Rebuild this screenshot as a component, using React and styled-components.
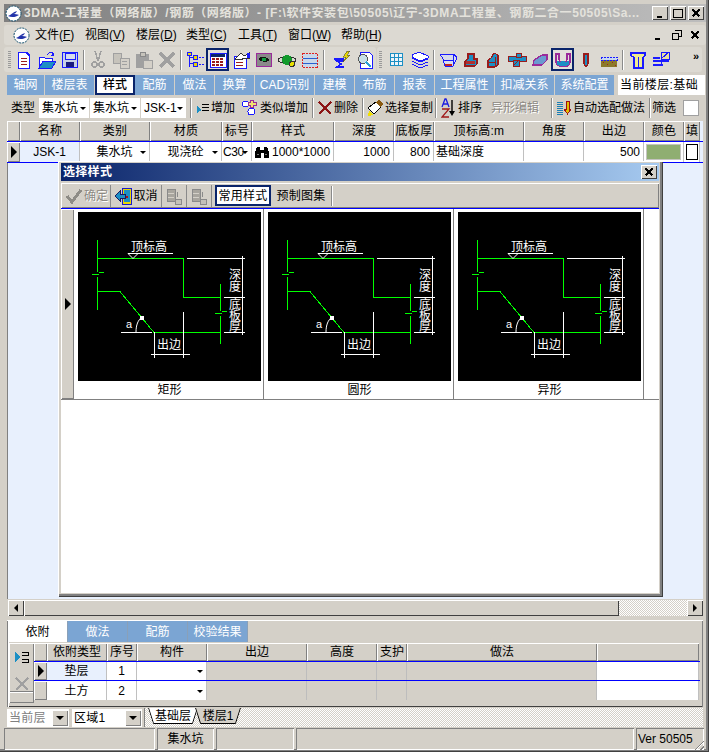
import React from "react";
import styled, { createGlobalStyle, css } from "styled-components";

const GRAY = "#d4d0c8";
const TAB = "#7ba5d3";
const BLUE = "#0000ff";
const raised = css`box-shadow: inset 1px 1px 0 #fff, inset -1px -1px 0 #808080;`;
const sunken = css`box-shadow: inset 1px 1px 0 #808080, inset -1px -1px 0 #fff;`;

const Global = createGlobalStyle`
  html, body { margin: 0; padding: 0; width: 709px; height: 752px; overflow: hidden; background: ${GRAY}; }
  * { box-sizing: border-box; }
  svg { display: block; flex: none; }
`;

const Win = styled.div`
  position: relative; width: 709px; height: 752px; background: ${GRAY};
  font: 12px/1 "Liberation Sans", "Noto Sans CJK SC", sans-serif; color: #000;
  padding: 4px 3px 0 4px; display: flex; flex-direction: column;
  box-shadow: inset -1px -1px 0 #404040, inset -3px -3px 0 #808080;
`;
const Title = styled.div`
  height: 18px; flex: none; display: flex; align-items: center; padding: 0 2px 0 1px; gap: 2px;
  background: linear-gradient(90deg, #808080, #bdbdbd);
`;
const TitleText = styled.div`
  flex: 1; color: #e4e2dc; font-weight: 700; white-space: nowrap; overflow: hidden; width: 0; letter-spacing: .56px;
`;
const CapBtn = styled.div`
  width: 16px; height: 14px; background: ${GRAY}; display: flex; align-items: center; justify-content: center;
  box-shadow: inset 1px 1px 0 #fff, inset -1px -1px 0 #404040;
`;
const Bar = styled.div`
  background: #dcd9d2; border-radius: 3px; display: flex; align-items: center;
`;
const Menu = styled(Bar)`
  height: 20px; margin-top: 3px; padding-left: 9px; flex: none;
`;
const MenuItem = styled.div`
  width: ${p => p.$w}px; white-space: nowrap;
  u { text-underline-offset: 1px; }
`;
const MdiBtns = styled.div`
  margin-left: auto; display: flex; gap: 7px; padding-right: 6px; align-items: center;
`;
const Tools = styled.div`
  margin-top: 2px; height: 25px; flex: none; display: flex; gap: 1px;
`;
const ToolGroup = styled(Bar)`
  width: ${p => p.$w}px; height: 25px; padding-left: ${p => p.$pl || 0}px;
`;
const Grip = styled.div`
  width: ${p => p.$w}px; height: 17px; flex: none; padding-left: 2px;
  &::before { content: ""; display: block; width: 3px; height: 100%;
    background: repeating-linear-gradient(180deg, #9a9a9a 0 1px, transparent 1px 2px); }
`;
const Sep = styled.div`
  width: ${p => p.$w}px; height: ${p => p.$h || 20}px; flex: none; position: relative;
  &::before { content: ""; position: absolute; left: ${p => p.$x ?? 2}px; top: 0; bottom: 0; width: 1px; background: #8a8a8a; box-shadow: 1px 0 0 #fff; }
`;
const ToolBtn = styled.div`
  width: 23px; height: 23px; flex: none; display: flex; align-items: center; justify-content: center;
  ${p => p.$on && css`border: 1px solid #0a246a; box-shadow: inset 0 0 0 1px #0a246a; background: #e2e0db;`}
`;
const More = styled.div`
  margin-left: auto; padding-right: 4px; font-weight: 700; font-size: 11px; letter-spacing: -1px; transform: translateY(-3px);
`;
const Tabs = styled.div`
  margin: 3px 1px 0 3px; height: 20px; flex: none; display: flex; align-items: stretch;
`;
const Tab = styled.div`
  width: ${p => p.$w}px; flex: none; background: ${TAB}; color: #fff; display: flex; align-items: center; justify-content: center;
  border-right: 1px solid #d4d0c8; white-space: nowrap;
  ${p => p.$on && css`background: #fff; color: #000; border: 2px solid #0a246a; font-weight: 500;`}
`;
const FloorTag = styled.div`
  margin-left: 3px; flex: 1; background: #fff; display: flex; align-items: center; padding-left: 2px; white-space: nowrap; overflow: hidden; letter-spacing: .4px;
`;
const Strip = styled.div`
  margin: 1px 0 0 3px; height: 24px; flex: none; display: flex; align-items: center;
`;
const StripLabel = styled.div`
  width: ${p => p.$w}px; flex: none; padding-left: ${p => p.$pl || 0}px; white-space: nowrap;
`;
const Combo = styled.div`
  width: ${p => p.$w}px; height: 20px; flex: none; background: #fff; display: flex; align-items: center; justify-content: space-between;
  padding: 0 3px 0 3px; margin-right: 1px; white-space: nowrap;
`;
const Caret = styled.i`
  display: block; flex: none; width: 0; height: 0; border: 3px solid transparent; border-top: 3px solid #000; border-bottom: 0;
`;
const StripBtn = styled.div`
  width: ${p => p.$w}px; flex: none; display: flex; align-items: center; gap: 1px; white-space: nowrap;
  padding-left: ${p => p.$pl || 0}px; color: ${p => p.$off ? "#8d8a84" : "#000"};
  ${p => p.$off && "text-shadow: 1px 1px 0 #fff;"}
`;
const CheckBox = styled.div`
  width: 16px; height: 16px; background: #fff; flex: none; margin-left: 6px; border: 1px solid #a0a0a0;
`;
const GridArea = styled.div`
  position: relative; margin: 1px 3px 0 3px; height: 478px; flex: none; background: #e8f0fd;
  box-shadow: inset 1px 0 0 #808080;
`;
const GridRow = styled.div`
  display: flex; height: ${p => p.$h}px; border-bottom: ${p => p.$line ? `1px solid ${BLUE}` : "0"};
`;
const Head = styled.div`
  width: ${p => p.$w}px; flex: none; background: ${GRAY}; display: flex; align-items: center; justify-content: center;
  white-space: nowrap; ${raised}; letter-spacing: ${p => p.$ls || 0}px;
`;
const Ind = styled.div`
  width: ${p => p.$w}px; flex: none; background: ${GRAY}; display: flex; align-items: center; justify-content: center; ${raised};
  &::after { content: ""; display: ${p => p.$on ? "block" : "none"}; border-left: 6px solid #000; border-top: 6px solid transparent; border-bottom: 6px solid transparent; }
`;
const Cell = styled.div`
  width: ${p => p.$w}px; flex: none; background: ${p => p.$bg || "#fff"}; display: flex; align-items: center; white-space: nowrap;
  justify-content: ${p => p.$j || "center"}; padding: ${p => p.$pad || "0"}; gap: 2px; letter-spacing: ${p => p.$ls || 0}px;
  border-right: 1px solid #c0c0c0; position: relative;
`;
const CaretAt = styled(Caret)`
  position: absolute; right: 3px; top: 50%; margin-top: -1px;
`;
const Swatch = styled.div`
  width: 35px; height: 16px; background: #8fae71; border: 1px solid #c4c4c0;
`;
const FillBox = styled.div`
  width: 12px; height: 16px; background: #fff; border: 1px solid #000;
`;

const Dialog = styled.div`
  position: absolute; left: 51px; top: 40px; width: 604px; height: 435px; background: ${GRAY}; padding: 2px 3px 3px 3px;
  display: flex; flex-direction: column;
  box-shadow: inset 1px 1px 0 #fff, inset -2px -2px 0 #808080, 1px 1px 0 #404040;
`;
const DlgTitle = styled.div`
  height: 18px; flex: none; display: flex; align-items: center; justify-content: space-between; padding: 0 0 0 2px;
  background: linear-gradient(90deg, #0a246a, #a6caf0); color: #fff; font-weight: 700; letter-spacing: .3px;
`;
const DlgClose = styled(CapBtn)`
  margin-right: 2px;
`;
const DlgBar = styled.div`
  margin-top: 2px; height: 26px; flex: none; display: flex; align-items: center; ${raised}; padding-left: 2px;
  border-bottom: 1px solid ${BLUE};
`;
const DlgBtn = styled.div`
  width: ${p => p.$w}px; height: 22px; flex: none; display: flex; align-items: center; justify-content: center; gap: 1px; white-space: nowrap;
  color: ${p => p.$off ? "#8d8a84" : "#000"}; ${p => p.$off && "text-shadow: 1px 1px 0 #fff;"}
  border-right: 1px solid #8a8a8a;
`;
const PickTab = styled.div`
  width: ${p => p.$w}px; height: 21px; flex: none; display: flex; align-items: center; justify-content: center; letter-spacing: .3px;
  ${p => p.$on && css`background: #fff; border: 1px solid #0a246a; box-shadow: inset 0 0 0 1px #0a246a; margin-left: 3px;`}
`;
const DlgBody = styled.div`
  flex: 1; background: #fff; display: flex; flex-direction: column;
`;
const Cards = styled.div`
  height: 191px; flex: none; display: flex; border-bottom: 1px solid #808080;
`;
const CardSide = styled.div`
  width: 13px; flex: none; background: ${GRAY}; display: flex; align-items: center; justify-content: center; ${raised};
  &::after { content: ""; border-left: 6px solid #000; border-top: 6px solid transparent; border-bottom: 6px solid transparent; }
`;
const Card = styled.div`
  width: 190px; flex: none; border-right: 1px solid #808080; padding: 3px 0 0 4px; display: flex; flex-direction: column;
`;
const CardCaption = styled.div`
  width: 183px; text-align: center; margin-top: 3px; font-size: 12px;
`;

const HScroll = styled.div`
  margin: 1px 3px 0 4px; height: 16px; flex: none; display: flex;
  background: repeating-conic-gradient(#fff 0 25%, ${GRAY} 0 50%) 0 0 / 2px 2px;
`;
const ScrollBtn = styled.div`
  width: 16px; flex: none; background: ${GRAY}; display: flex; align-items: center; justify-content: center;
  box-shadow: inset 1px 1px 0 #fff, inset -1px -1px 0 #404040;
  &::after { content: ""; border-top: 4px solid transparent; border-bottom: 4px solid transparent;
    ${p => p.$right ? "border-left: 4px solid #000;" : "border-right: 4px solid #000;"} }
`;
const ScrollThumb = styled.div`
  width: 595px; flex: none; background: ${GRAY}; box-shadow: inset 1px 1px 0 #fff, inset -1px -1px 0 #404040;
`;
const ScrollGap = styled.div`
  flex: 1;
`;
const Panel = styled.div`
  margin: 4px 3px 0 3px; height: 87px; flex: none; background: ${GRAY}; border-top: 1px solid #fff;
  box-shadow: inset 1px 0 0 #808080, inset -1px 0 0 #808080, inset 0 -1px 0 #404040;
  display: flex; flex-direction: column; padding: 0 1px;
`;
const PanelTabs = styled.div`
  height: 21px; flex: none; display: flex;
`;
const PanelTab = styled.div`
  width: 60px; flex: none; display: flex; align-items: center; justify-content: center; white-space: nowrap;
  background: ${p => p.$on ? "#fff" : TAB}; color: ${p => p.$on ? "#000" : "#fff"}; border-right: 1px solid #8aa0b8;
`;
const PanelBody = styled.div`
  display: flex; padding: 1px 2px 0 1px; flex: 1;
  box-shadow: inset 1px 0 0 #fff;
`;
const SideTools = styled.div`
  width: 25px; flex: none; display: flex; flex-direction: column; align-items: center; height: 60px; ${raised}; padding-top: 7px; gap: 10px; position: relative;
  &::after { content: ""; position: absolute; left: 1px; right: 1px; bottom: 11px; height: 1px; background: #808080; box-shadow: 0 1px 0 #fff; }
`;
const SubGrid = styled.div`
  flex: 1; display: flex; flex-direction: column;
`;
const GrayCell = styled(Cell)`
  background: ${GRAY}; border-right: 1px solid #bdbdbd;
`;
const SheetBar = styled.div`
  margin: 1px 0 0 3px; height: 19px; flex: none; display: flex; align-items: center;
`;
const SheetCombo = styled.div`
  width: ${p => p.$w}px; height: 18px; flex: none; background: #fff; display: flex; align-items: center; padding-left: 2px; justify-content: space-between;
  margin-right: ${p => p.$mr || 0}px; color: ${p => p.$mute ? "#808080" : "#000"}; letter-spacing: .3px;
`;
const ComboDrop = styled.div`
  width: 16px; height: 16px; margin-right: 1px; background: ${GRAY}; display: flex; align-items: center; justify-content: center;
  box-shadow: inset 1px 1px 0 #fff, inset -1px -1px 0 #808080;
  &::after { content: ""; border-top: 4px solid #000; border-left: 4px solid transparent; border-right: 4px solid transparent; }
`;
const SheetTabs = styled.div`
  flex: 1; height: 19px; margin: 0 3px 0 2px; display: flex; align-items: flex-start; padding-left: 3px; border-left: 1px solid #808080;
  background: repeating-conic-gradient(#fff 0 25%, ${GRAY} 0 50%) 0 0 / 2px 2px;
`;
const Sheet = styled.div`
  width: ${p => p.$w}px; height: 16px; display: flex; align-items: center; justify-content: center; flex: none; white-space: nowrap;
  background: ${p => p.$on ? "#fff" : GRAY};
  clip-path: polygon(0 0, 100% 0, calc(100% - 5px) 100%, 5px 100%); margin-right: -3px; position: relative;
`;
const SheetEdge = styled.svg`
  position: absolute; left: 0; top: 0;
`;
const Status = styled.div`
  margin: 1px 3px 0 0; height: 22px; flex: none; display: flex; gap: 2px;
`;
const StatusCell = styled.div`
  width: ${p => p.$w}px; flex: none; ${sunken}; display: flex; align-items: center; justify-content: ${p => p.$j || "center"}; padding-left: ${p => p.$pl || 0}px;
  position: relative; white-space: nowrap;
`;
const Resize = styled.div`
  position: absolute; right: 0; bottom: 0; width: 12px; height: 12px;
  background: repeating-linear-gradient(135deg, transparent 0 2px, #808080 2px 3px, #fff 3px 4px);
  clip-path: polygon(100% 0, 100% 100%, 0 100%);
`;

/* drawings */
const I = ({ s = 20, children, vb = 20 }) => (
  <svg width={s} height={s} viewBox={`0 0 ${vb} ${vb}`} shapeRendering="crispEdges">{children}</svg>
);
const Logo = () => (
  <svg width="17" height="17" viewBox="0 0 17 17">
    <circle cx="8.5" cy="8.5" r="7.5" fill="#fff" stroke="#0a4a6a" strokeDasharray="2 1" />
    <path d="M3 11c3-1 5-4 9-5-1 2-2 3-4 3 2 0 4 0 6 1-3 2-7 3-11 1z" fill="#2233aa" />
  </svg>
);
const B = "#1a1aff", R = "#9a1c1c", T = "#1c8fc4", P = "#9a2a9a", G = "#a0a0a0";
const icons = {
  doc: <I><path d="M4.5 2.5h8l3 3v13h-11z" fill="#fff" stroke={B} strokeWidth="1.5" /><path d="M7 8h6M7 11h6M7 14h6" stroke={R} /></I>,
  open: <I><path d="M2 7h5l1 1h7v3H6l-3 7H2z" fill="#fff" stroke={B} /><path d="M6 11h13l-4 7H2z" fill="#1c8fc4" stroke={B} /><path d="M10 5c2-3 5-3 7-1" fill="none" stroke={B} /><path d="M17 2v4h-3z" fill={B} /></I>,
  save: <I><rect x="2.5" y="2.5" width="15" height="15" fill="#c8d0e8" stroke={B} strokeWidth="1.5" /><rect x="5" y="3" width="10" height="6" fill="#d8dcec" stroke={B} /><rect x="6" y="12" width="8" height="5" fill="#1a1a80" /></I>,
  cut: <I><path d="M7 1l3 10M13 1l-3 10" stroke={G} strokeWidth="1.5" /><circle cx="6.5" cy="14.5" r="2.5" fill="none" stroke={G} strokeWidth="1.5" /><circle cx="13.5" cy="14.5" r="2.5" fill="none" stroke={G} strokeWidth="1.5" /></I>,
  copy: <I><path d="M2 3h8v10H2z" fill="#c6c3bb" stroke={G} /><path d="M9 8h9v10H9z" fill="#d4d0c8" stroke={G} /><path d="M11 11h5M11 14h5" stroke={G} /></I>,
  paste: <I><path d="M2 4h13v14H2z" fill={G} /><path d="M6 2h5v4H6z" fill="#c6c3bb" stroke="#888" /><path d="M9 10h9v8H9z" fill="#d4d0c8" stroke={G} /></I>,
  del: <I><path d="M3 3l14 14M17 3L3 17" stroke={G} strokeWidth="3" /></I>,
  tree: <I><path d="M4 3v14M4 7h6M4 13h6" stroke={B} /><rect x="2" y="2" width="4" height="3" fill="#e8d800" stroke={B} /><rect x="8" y="5" width="4" height="4" fill="#e8d800" stroke={B} /><rect x="8" y="12" width="4" height="4" fill="#e8d800" stroke={B} /><path d="M14 7h5M14 14h5" stroke={B} strokeDasharray="2 1" /></I>,
  cal: <I><rect x="2" y="3" width="16" height="14" fill="#fff" stroke={B} /><rect x="3" y="4" width="14" height="3" fill="#0a246a" /><path d="M4 9h12M4 12h12M4 15h12" stroke="#9a1c1c" strokeWidth="2" strokeDasharray="3 1" /></I>,
  form: <I><rect x="3" y="6" width="12" height="12" fill="#fff" stroke={B} /><path d="M5 12h7M5 15h7" stroke={R} /><path d="M4 9l6-6 3 3 5-3v5h-5l-3 2z" fill="#fff" stroke="#333" /><rect x="16" y="3" width="3" height="5" fill={B} /></I>,
  eye: <I><rect x="2.5" y="3.5" width="15" height="13" fill="#8a8a8a" stroke={P} strokeWidth="1.2" /><path d="M4 9c3-3 8-3 12 1-4 3-9 2-12-1z" fill="#101810" /><circle cx="10" cy="9.5" r="2" fill="#10a040" /></I>,
  planet: <I><ellipse cx="10" cy="10" rx="9" ry="3" fill="none" stroke="#303030" /><circle cx="10" cy="10" r="5" fill="#129a2c" /><circle cx="15" cy="14" r="2.5" fill="#e8e000" stroke="#333" /></I>,
  rows: <I><rect x="2.5" y="3.5" width="15" height="14" fill="#c8d8ea" stroke="#e02020" strokeWidth="1.5" strokeDasharray="2 1" /><path d="M3 8h14M3 13h14" stroke="#2a60d0" /></I>,
  sigma: <I><path d="M2 9h9v2H5l4 3-4 3h7" fill="none" stroke={B} strokeWidth="1.5" /><path d="M15 1l-4 6h3l-3 5 7-7h-3l3-4z" fill="#e8d800" stroke="#333" strokeWidth=".5" /></I>,
  find: <I><path d="M5 2h9l3 3v13H5z" fill="#fff" stroke={B} /><circle cx="8" cy="9" r="4.5" fill="#c8e0e8" stroke="#555" /><path d="M11 12l5 5" stroke="#2a9fd6" strokeWidth="2" /></I>,
  grid: <I><rect x="3.5" y="3.5" width="12" height="12" fill="#eef4f8" stroke={T} /><path d="M7.5 4v11M11.5 4v11M4 7.5h11M4 11.5h11" stroke={T} /></I>,
  layers: <I><path d="M2 5l7-3 9 4v2l-8 3-8-4z" fill="#fff" stroke={B} /><path d="M2 8l8 4 8-3M2 11l8 4 8-3M2 14l8 4 8-3" fill="none" stroke={B} /></I>,
  pit1: <I><path d="M2 4h14l3 4-4 8H7L5 9z" fill="#d8dcec" stroke={B} /><path d="M6 10h9M15 4v12" stroke={B} /><path d="M7 14h7v2H7z" fill="#c02020" /></I>,
  pit2: <I><path d="M7 4h6v5h3v5l-2 2H4v-5l3-2z" fill={T} stroke={R} strokeWidth="1.2" /><path d="M5 11h9v3H5z" fill="#b03030" /></I>,
  pit3: <I><path d="M10 3l4 2v10l-3 2H4v-7l3-2z" fill={T} stroke={R} strokeWidth="1.2" /><path d="M11 7v9M5 12h6" stroke={R} /></I>,
  pit4: <I><path d="M1 6h18v5H1z" fill={T} stroke={R} /><path d="M9 3h5v4H9zM6 10h6v6H6z" fill={T} stroke={R} /><path d="M7 15l4-4" stroke={R} /></I>,
  pit5: <I><path d="M12 5h5v5l-5 5H3l1-5z" fill="#6a9ad0" stroke={P} strokeWidth="1.2" /></I>,
  sump: <I><path d="M3 11h14v2c0 5-14 5-14 0z" fill={T} /><path d="M3 4h3v6c0 3 8 3 8 0V4h3v9c0 5-14 5-14 0z" fill="none" stroke={P} strokeWidth="1.1" /><path d="M7 12h6v1H7z" fill={T} /></I>,
  pile: <I><path d="M8 4h4v10l-2 3-2-3z" fill={T} stroke={R} strokeWidth="1.2" /><path d="M8 3h4v2H8z" fill={R} /></I>,
  soil: <I><rect x="2" y="10" width="16" height="7" fill="#8c7a2a" /><rect x="2" y="7" width="16" height="3" fill="#c8d8f0" stroke={B} strokeDasharray="2 1" /><path d="M4 12h1M8 14h1M13 12h1M16 15h1" stroke="#a02020" /></I>,
  col: <I><path d="M3 3h14v3l-2 1v11H6V7L3 6z" fill="#f0ec90" stroke={B} strokeWidth="1.2" /><path d="M10 7v11" stroke={B} /></I>,
  beam: <I><path d="M2 8h7M2 11h16M2 15h10M13 8h5" stroke={B} strokeWidth="1.2" /><rect x="10" y="2" width="8" height="7" fill="#e8e0a0" stroke={B} /><path d="M10 9l8-7" stroke={B} /><path d="M10 11v5" stroke={B} /></I>,
};
const Tool = ({ k, on }) => <ToolBtn $on={on}>{icons[k]}</ToolBtn>;

const PlusIcon = () => <I s={14} vb={14}><path d="M1 12l0-7 5 4z" fill="#1c8fc4" /><path d="M6 3h7M6 6h7M6 9h7" stroke="#000" /></I>;
const SimilarIcon = () => <I s={18} vb={18}><circle cx="4.5" cy="5" r="3" fill="#fff" stroke={B} /><circle cx="10.5" cy="12.5" r="3.5" fill="#fff" stroke={B} /><path d="M9 1h3v2h3v3h-3v2H9V6H7V3h2z" fill="#f0e070" stroke={P} /></I>;
const RedX = () => <I s={16} vb={16}><path d="M2 2l12 12M14 2L2 14" stroke="#8c1414" strokeWidth="2.4" /></I>;
const Brush = () => <I s={18} vb={18}><path d="M2 9l8-6 5 5-7 7z" fill="#fff" stroke="#000" /><path d="M10 3l3-2 4 4-3 3z" fill="#8a5a10" /><path d="M3 12l4 4-5 1z" fill="#f0e000" /></I>;
const SortIcon = () => (
  <svg width="16" height="20" viewBox="0 0 16 20">
    <path d="M1 9L4 1h1l3 8M2.5 6h4" fill="none" stroke="#1a1ae0" strokeWidth="1.3" />
    <path d="M1 11h7L1 19h7" fill="none" stroke="#a01818" strokeWidth="1.3" />
    <path d="M11 2v13" stroke="#000" strokeWidth="1.4" /><path d="M8 13h6l-3 5z" fill="#000" />
  </svg>
);
const AutoIcon = () => <I s={16} vb={16}><path d="M1 2h6M1 4h6M1 6h6M1 8h6M1 10h6M1 12h6M1 14h6" stroke="#1c7fb4" /><path d="M10 1h3v8h2l-3.5 5L8 9h2z" fill="#e0c000" stroke="#a01010" /></I>;
const Binoc = () => <I s={16} vb={16}><path d="M1 14V8l2-5h3v3h4V3h3l2 5v6h-5V9H9v0H7v5z" fill="#000" /><path d="M3 10h2M11 10h2" stroke="#777" /></I>;
const Check = () => <I s={18} vb={18}><path d="M2 9l5 6L16 3" fill="none" stroke="#8e8c86" strokeWidth="3" /></I>;
const Door = () => <I s={18} vb={18}><rect x="8" y="1" width="9" height="16" fill="#e8d800" stroke="#1a1acc" /><rect x="10" y="3" width="6" height="12" fill="#1c8fc4" /><path d="M1 9l5-5v3h5v4H6v3z" fill="#1c8fc4" stroke="#1a1a60" /><rect x="12" y="9" width="2" height="2" fill="#b01010" /></I>;
const DbIcon = () => <I s={18} vb={18}><rect x="2" y="2" width="8" height="12" fill="#a8a59e" stroke="#8a8a8a" /><path d="M3 6h6M3 10h6" stroke="#d4d0c8" /><path d="M12 5v5M10 12h6v5h-6z" stroke="#8a8a8a" fill="#c4c1b9" /></I>;
const SigmaLines = () => <I s={16} vb={16}><path d="M1 2v10l5-5z" fill="#1c8fc4" /><path d="M8 2h6v3H8M8 9h6v3H8" fill="none" stroke="#000" /></I>;
const GrayX = () => <I s={16} vb={16}><path d="M2 2l12 12M14 2L2 14" stroke="#a0a0a0" strokeWidth="2" /></I>;
const XGlyph = () => <I s={10} vb={10}><path d="M1.5 1.5l7 7M8.5 1.5l-7 7" stroke="#000" strokeWidth="1.6" /></I>;

const Diagram = () => {
  const g = "#00ff00", w = "#fff";
  const t = { fill: w, fontSize: 12, fontFamily: "Noto Sans CJK SC, sans-serif" };
  const v = { ...t, style: { writingMode: "vertical-rl" } };
  return (
    <svg width="183" height="169" viewBox="0 0 183 169" style={{ background: "#000" }}>
      <g stroke={g} fill="none" shapeRendering="crispEdges">
        <path d="M19.5 28V60M19.5 65V98M19.5 46.5H105.5V85.5H142.5M142.5 72V99M142.5 104V132M19.5 79.5H42M76 120.5H142.5M42 79.5L76 120.5" />
        <path d="M14 62.5H21M21 60.5H26M137 101.5H144M144 99.5H149" />
      </g>
      <g stroke={w} fill="none" shapeRendering="crispEdges">
        <path d="M50 41.5H95M109 46.5H167M164.5 44V123M146 85.5H167M146 120.5H167M43 120.5H74M76.5 120V146M105.5 100V146M73 142.5H112" />
      </g>
      <path d="M50 41.5H60L55 46.5Z" fill="none" stroke={w} />
      <path d="M58 120C58 113 60 108 64 105" fill="none" stroke={w} />
      <path d="M62 104h4v4h-4z" fill={w} />
      <text x="53" y="39" {...t}>顶标高</text>
      <text x="48" y="116" fill={w} fontSize="11" fontFamily="Liberation Sans, sans-serif">a</text>
      <text x="79" y="137" {...t}>出边</text>
      <text x="157" y="56" {...v}>深度</text>
      <text x="157" y="86" {...v} letterSpacing="-1">底板厚</text>
    </svg>
  );
};

const mainCols = [13, 60, 70, 72, 30, 82, 60, 40, 90, 60, 60, 40, 16];
const mainHead = ["名称", "类别", "材质", "标号", "样式", "深度", "底板厚", "顶标高:m", "角度", "出边", "颜色"];
const subCols = [13, 60, 30, 70, 100, 70, 30, 190, 102];
const subHead = ["依附类型", "序号", "构件", "出边", "高度", "支护", "做法", ""];

const SubRow = ({ on, name, no, line }) => (
  <GridRow $h={19} $line={line}>
    <Ind $w={subCols[0]} $on={on} />
    <Cell $w={subCols[1]} $bg={on ? "#e8f0fd" : "#fff"}>{name}</Cell>
    <Cell $w={subCols[2]}>{no}</Cell>
    <Cell $w={subCols[3]}><CaretAt /></Cell>
    <GrayCell $w={subCols[4]} />
    <GrayCell $w={subCols[5]} />
    <GrayCell $w={subCols[6]} />
    <GrayCell $w={subCols[7]} />
    <Cell $w={subCols[8]} />
  </GridRow>
);

const SheetTab = ({ w, on, first, children }) => (
  <Sheet $w={w} $on={on}>
    {children}
    <SheetEdge width={w} height={16} viewBox={`0 0 ${w} 16`}>
      <path d={`M0.5 0L5.5 15.5H${w - 5.5}L${w - 0.5} 0`} fill="none" stroke="#000" />
    </SheetEdge>
  </Sheet>
);

export default function App() {
  return (
    <Win>
      <Global />
      <Title>
        <Logo />
        <TitleText>3DMA-工程量（网络版）/钢筋（网络版）- [F:\软件安装包\50505\辽宁-3DMA工程量、钢筋二合一50505\Sa...</TitleText>
        <CapBtn><I s={10} vb={10}><path d="M2 8h5v2H2z" fill="#000" /></I></CapBtn>
        <CapBtn><I s={10} vb={10}><rect x=".5" y="1.5" width="9" height="8" fill="none" stroke="#000" /><path d="M0 1.5h10" stroke="#000" /></I></CapBtn>
        <CapBtn><XGlyph /></CapBtn>
      </Title>
      <Menu>
        <MenuItem $w={22}><Logo /></MenuItem>
        <MenuItem $w={50}>文件(<u>F</u>)</MenuItem>
        <MenuItem $w={51}>视图(<u>V</u>)</MenuItem>
        <MenuItem $w={50}>楼层(<u>D</u>)</MenuItem>
        <MenuItem $w={52}>类型(<u>C</u>)</MenuItem>
        <MenuItem $w={50}>工具(<u>T</u>)</MenuItem>
        <MenuItem $w={53}>窗口(<u>W</u>)</MenuItem>
        <MenuItem $w={50}>帮助(<u>H</u>)</MenuItem>
        <MdiBtns>
          <I s={12} vb={12}><path d="M3 9h5v2H3z" fill="#000" /></I>
          <I s={12} vb={12}><path d="M4 1.5h6v6h-2M1.5 4.5h6v6h-6z" fill="none" stroke="#000" /><path d="M4 1.5h6M1.5 4.5h6" stroke="#000" strokeWidth="1" /></I>
          <XGlyph />
        </MdiBtns>
      </Menu>
      <Tools>
        <ToolGroup $w={372} $pl={2}>
          <Grip $w={6} />
          <Tool k="doc" /><Tool k="open" /><Tool k="save" />
          <Sep $w={5} />
          <Tool k="cut" /><Tool k="copy" /><Tool k="paste" /><Tool k="del" />
          <Sep $w={5} />
          <Tool k="tree" /><Tool k="cal" on /><Tool k="form" /><Tool k="eye" /><Tool k="planet" /><Tool k="rows" />
          <Sep $w={9} />
          <Tool k="sigma" /><Tool k="find" />
        </ToolGroup>
        <ToolGroup $w={325}>
          <Grip $w={8} $x={2} />
          <Tool k="grid" /><Tool k="layers" />
          <Sep $w={5} />
          <Tool k="pit1" /><Tool k="pit2" /><Tool k="pit3" /><Tool k="pit4" /><Tool k="pit5" /><Tool k="sump" on /><Tool k="pile" /><Tool k="soil" />
          <Sep $w={6} />
          <Tool k="col" /><Tool k="beam" />
          <More>»</More>
        </ToolGroup>
      </Tools>
      <Tabs>
        <Tab $w={38}>轴网</Tab>
        <Tab $w={50}>楼层表</Tab>
        <Tab $w={40} $on>样式</Tab>
        <Tab $w={40}>配筋</Tab>
        <Tab $w={40}>做法</Tab>
        <Tab $w={40}>换算</Tab>
        <Tab $w={60}>CAD识别</Tab>
        <Tab $w={40}>建模</Tab>
        <Tab $w={40}>布筋</Tab>
        <Tab $w={40}>报表</Tab>
        <Tab $w={60}>工程属性</Tab>
        <Tab $w={60}>扣减关系</Tab>
        <Tab $w={60}>系统配置</Tab>
        <FloorTag>当前楼层:基础</FloorTag>
      </Tabs>
      <Strip>
        <StripLabel $w={32} $pl={4}>类型</StripLabel>
        <Combo $w={50}>集水坑<Caret /></Combo>
        <Combo $w={50}>集水坑<Caret /></Combo>
        <Combo $w={45}>JSK-1<Caret /></Combo>
        <Sep $w={6} $x={3} />
        <StripBtn $w={48} $pl={3}><PlusIcon />增加</StripBtn>
        <StripBtn $w={71}><SimilarIcon />类似增加</StripBtn>
        <Sep $w={4} $x={0} />
        <StripBtn $w={46} $pl={1}><RedX />删除</StripBtn>
        <Sep $w={4} $x={0} />
        <StripBtn $w={69}><Brush />选择复制</StripBtn>
        <Sep $w={4} $x={0} />
        <StripBtn $w={51} $pl={2}><SortIcon />排序</StripBtn>
        <StripBtn $w={61} $pl={1} $off>异形编辑</StripBtn>
        <Sep $w={5} $x={0} />
        <StripBtn $w={93}><AutoIcon />自动选配做法</StripBtn>
        <Sep $w={3} $x={0} />
        <StripBtn $w={25}>筛选</StripBtn>
        <CheckBox />
      </Strip>
      <GridArea>
        <GridRow $h={21} $line>
          <Ind $w={mainCols[0]} />
          {mainHead.map((h, i) => <Head key={h} $w={mainCols[i + 1]} $ls={i === 5 ? 0 : 0.3}>{h}</Head>)}
          <Head $w={mainCols[12]}>填</Head>
        </GridRow>
        <GridRow $h={21} $line>
          <Ind $w={mainCols[0]} $on />
          <Cell $w={mainCols[1]} $bg="#e8f0fd">JSK-1</Cell>
          <Cell $w={mainCols[2]}>集水坑<CaretAt /></Cell>
          <Cell $w={mainCols[3]}>现浇砼<CaretAt /></Cell>
          <Cell $w={mainCols[4]} $j="flex-start" $pad="0 0 0 1px" $ls={-0.4}>C30<CaretAt /></Cell>
          <Cell $w={mainCols[5]} $j="flex-start" $pad="0 0 0 2px"><Binoc />1000*1000</Cell>
          <Cell $w={mainCols[6]} $j="flex-end" $pad="0 3px 0 0">1000</Cell>
          <Cell $w={mainCols[7]} $j="flex-end" $pad="0 3px 0 0">800</Cell>
          <Cell $w={mainCols[8]} $j="flex-start" $pad="0 0 0 2px">基础深度</Cell>
          <Cell $w={mainCols[9]} />
          <Cell $w={mainCols[10]} $j="flex-end" $pad="0 3px 0 0">500</Cell>
          <Cell $w={mainCols[11]}><Swatch /></Cell>
          <Cell $w={mainCols[12]}><FillBox /></Cell>
        </GridRow>
        <Dialog>
          <DlgTitle>
            选择样式
            <DlgClose><XGlyph /></DlgClose>
          </DlgTitle>
          <DlgBar>
            <DlgBtn $w={48} $off><Check />确定</DlgBtn>
            <DlgBtn $w={51}><Door />取消</DlgBtn>
            <DlgBtn $w={25} $off><DbIcon /></DlgBtn>
            <DlgBtn $w={25} $off><DbIcon /></DlgBtn>
            <PickTab $w={56} $on>常用样式</PickTab>
            <PickTab $w={60}>预制图集</PickTab>
            <Sep $w={2} $x={0} />
          </DlgBar>
          <DlgBody>
            <Cards>
              <CardSide />
              {["矩形", "圆形", "异形"].map(n => (
                <Card key={n}>
                  <Diagram />
                  <CardCaption>{n}</CardCaption>
                </Card>
              ))}
            </Cards>
          </DlgBody>
        </Dialog>
      </GridArea>
      <HScroll>
        <ScrollBtn />
        <ScrollThumb />
        <ScrollGap />
        <ScrollBtn $right />
      </HScroll>
      <Panel>
        <PanelTabs>
          <PanelTab $on>依附</PanelTab>
          <PanelTab>做法</PanelTab>
          <PanelTab>配筋</PanelTab>
          <PanelTab>校验结果</PanelTab>
        </PanelTabs>
        <PanelBody>
          <SideTools><SigmaLines /><GrayX /></SideTools>
          <SubGrid>
            <GridRow $h={19} $line>
              <Ind $w={subCols[0]} />
              {subHead.map((h, i) => <Head key={i} $w={subCols[i + 1]}>{h}</Head>)}
            </GridRow>
            <SubRow on name="垫层" no="1" line />
            <SubRow name="土方" no="2" />
          </SubGrid>
        </PanelBody>
      </Panel>
      <SheetBar>
        <SheetCombo $w={62} $mr={3} $mute>当前层<ComboDrop /></SheetCombo>
        <SheetCombo $w={70}>区域1<ComboDrop /></SheetCombo>
        <SheetTabs>
          <SheetTab w={50} on>基础层</SheetTab>
          <SheetTab w={46}>楼层1</SheetTab>
        </SheetTabs>
      </SheetBar>
      <Status>
        <StatusCell $w={151} />
        <StatusCell $w={57}>集水坑</StatusCell>
        <StatusCell $w={78} />
        <StatusCell $w={338} />
        <StatusCell $w={68} $j="flex-start" $pl={2}>Ver 50505<Resize /></StatusCell>
      </Status>
    </Win>
  );
}
